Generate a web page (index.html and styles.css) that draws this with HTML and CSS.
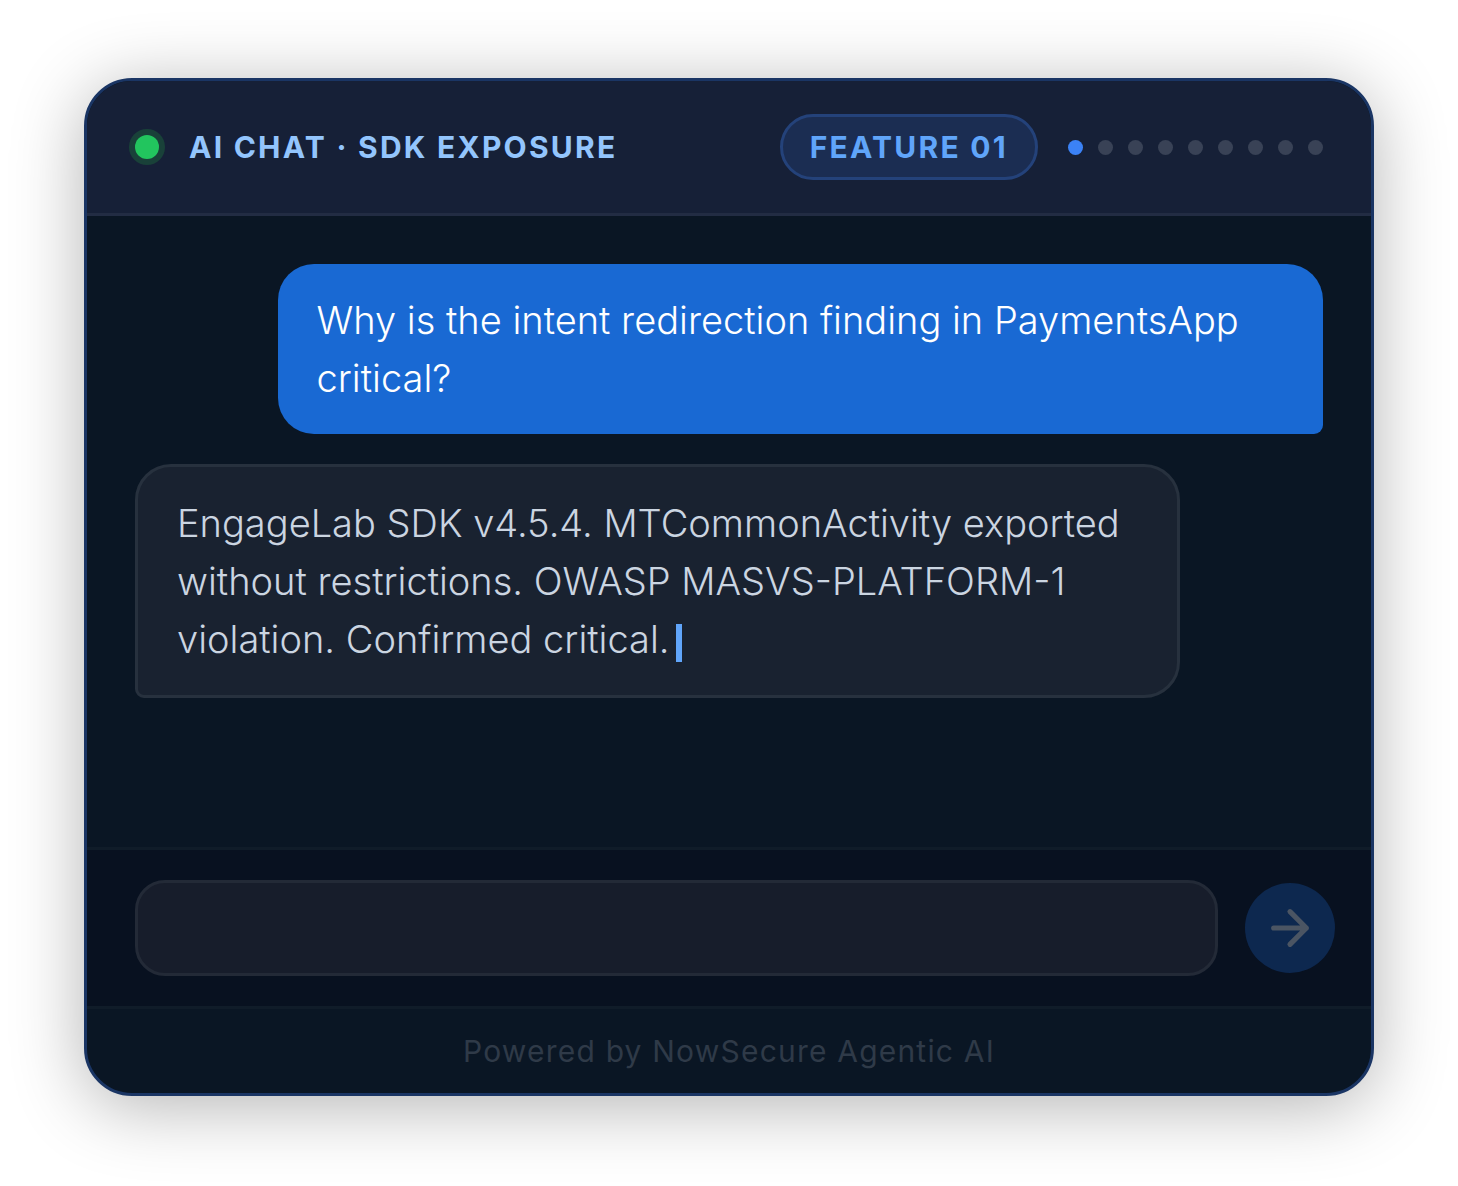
FILE: index.html
```html
<!DOCTYPE html>
<html lang="en">

<head>
    <meta charset="utf-8">
    <meta name="viewport" content="width=device-width, initial-scale=1.0">
    <title>AI Chat</title>
    <link rel="stylesheet" href="styles.css">
</head>

<body>
    <main class="chat">
        <header class="chat-header">
            <span class="status"></span>
            <h1 class="title">AI CHAT · SDK EXPOSURE</h1>
            <span class="badge">FEATURE 01</span>
            <div class="dots">
                <span class="dot active"></span>
                <span class="dot"></span>
                <span class="dot"></span>
                <span class="dot"></span>
                <span class="dot"></span>
                <span class="dot"></span>
                <span class="dot"></span>
                <span class="dot"></span>
                <span class="dot"></span>
            </div>
        </header>

        <section class="messages">
            <p class="bubble user">Why is the intent redirection finding in PaymentsApp critical?</p>
            <p class="bubble bot">EngageLab SDK v4.5.4. MTCommonActivity exported without restrictions. OWASP MASVS-PLATFORM-1 violation. Confirmed critical.<span class="cursor"></span></p>
        </section>

        <form class="composer">
            <input type="text" class="input" aria-label="Message">
            <button type="button" class="send" aria-label="Send">
                <svg viewBox="0 0 24 24" width="56" height="56">
                    <path d="M5 12h14M12 5l7 7-7 7" />
                </svg>
            </button>
        </form>

        <footer class="chat-footer">Powered by NowSecure Agentic AI</footer>
    </main>
</body>

</html>
```

FILE: styles.css
```css
* {
    margin: 0;
    padding: 0;
    box-sizing: border-box;
    font-family: Inter, sans-serif;
}

body {
    min-height: 100vh;
    padding: 78px 84px 90px;
    background: #ffffff;
    display: flex;
}

.chat {
    flex: 1;
    display: flex;
    flex-direction: column;
    overflow: hidden;
    background: #0a1624;
    border: 3px solid #1a3564;
    border-radius: 48px;
    box-shadow: 0 10px 72px rgba(0, 0, 0, .3);
}

/* header */
.chat-header {
    display: flex;
    align-items: center;
    padding: 33px 48px;
    background: #162037;
    border-bottom: 3px solid #222c43;
}

.status {
    width: 24px;
    height: 24px;
    border-radius: 50%;
    background: #22c55e;
    box-shadow: 0 0 0 6px #194139;
}

.title {
    flex: 1;
    margin-left: 30px;
    font-size: 30px;
    line-height: 36px;
    font-weight: 700;
    letter-spacing: .075em;
    color: #93c5fd;
}

.badge {
    padding: 12px 27px;
    font-size: 30px;
    line-height: 36px;
    font-weight: 700;
    letter-spacing: .075em;
    color: #60a5fa;
    background: #1b2d52;
    border: 3px solid #24427a;
    border-radius: 60px;
}

.dots {
    display: flex;
    gap: 15px;
    margin-left: 30px;
}

.dot {
    width: 15px;
    height: 15px;
    border-radius: 50%;
    background: #394256;
}

.dot.active {
    background: #3b82f6;
}

/* messages */
.messages {
    flex: 1;
    display: flex;
    flex-direction: column;
    gap: 30px;
    padding: 48px;
}

.bubble {
    max-width: 88%;
    padding: 27px 39px;
    font-size: 38px;
    font-weight: 350;
    line-height: 58px;
    border-radius: 36px;
}

.user {
    align-self: flex-end;
    color: #ffffff;
    background: #1969d3;
    border-bottom-right-radius: 9px;
}

.bot {
    align-self: flex-start;
    color: #cbd5e1;
    background: #192230;
    border: 3px solid #27313e;
    border-bottom-left-radius: 9px;
}

.cursor {
    display: inline-block;
    width: 6px;
    height: 38px;
    margin-left: 6px;
    vertical-align: text-bottom;
    background: #60a5fa;
}

/* input bar */
.composer {
    display: flex;
    align-items: center;
    gap: 27px;
    padding: 30px 36px 30px 48px;
    background: #081120;
    border-top: 3px solid #101c29;
}

.input {
    flex: 1;
    min-width: 0;
    height: 96px;
    padding: 0 36px;
    font-size: 38px;
    color: #cbd5e1;
    background: #171d2b;
    border: 3px solid #232a37;
    border-radius: 30px;
    outline: none;
}

.send {
    display: flex;
    align-items: center;
    justify-content: center;
    width: 90px;
    height: 90px;
    border: none;
    border-radius: 50%;
    background: #0d284f;
    cursor: pointer;
}

.send svg {
    fill: none;
    stroke: #4b5563;
    stroke-width: 2.2;
    stroke-linecap: round;
    stroke-linejoin: round;
}

.chat-footer {
    padding: 24px;
    border-top: 3px solid #101c29;
    text-align: center;
    font-size: 30px;
    line-height: 36px;
    letter-spacing: .04em;
    color: #2f3a48;
}
```
